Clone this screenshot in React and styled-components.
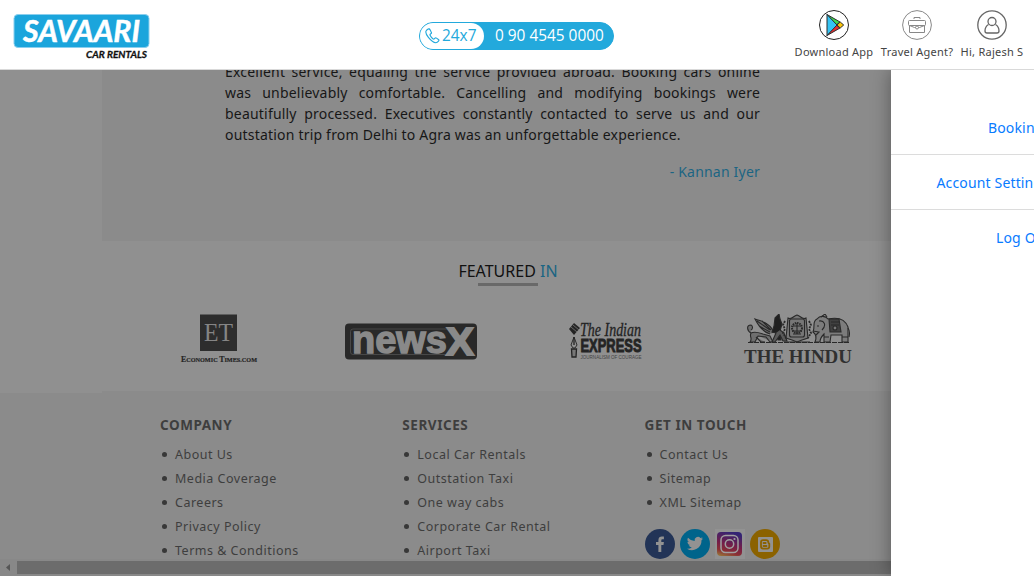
import React from "react";
import styled, { createGlobalStyle } from "styled-components";

const GlobalStyle = createGlobalStyle`
  * { box-sizing: border-box; }
  html, body { margin: 0; padding: 0; overflow: hidden; }
  body { font-family: "Noto Sans", "Open Sans", sans-serif; }
`;

const Screen = styled.div`
  position: relative;
  display: flex;
  flex-direction: column;
  width: 1034px;
  height: 576px;
  overflow: hidden;
  background: #8b8b8b;
`;

const Header = styled.header`
  display: flex;
  justify-content: space-between;
  flex: none;
  height: 70px;
  padding: 0 10px 0 13px;
  background: #fff;
  border-bottom: 1px solid #d9d9d9;
`;

const Brand = styled.svg`
  display: block;
  width: 138px;
  height: 48px;
  margin-top: 13px;
`;

const Phone = styled.div`
  display: flex;
  align-items: center;
  width: 195px;
  height: 28px;
  margin: 22px 0 0 88px;
  background: #23a9dc;
  border: 1px solid #23a9dc;
  border-radius: 14px;
  color: #fff;
  font-family: "Open Sans", "Noto Sans", sans-serif;
  font-size: 15.4px;
  line-height: 26px;
`;

const PhoneTag = styled.span`
  display: flex;
  align-items: center;
  width: 64px;
  height: 26px;
  padding-left: 5px;
  gap: 2px;
  background: #fff;
  border-radius: 13px;
  color: #23a9dc;
`;

const PhoneNumber = styled.span`
  margin-left: 11px;
  white-space: nowrap;
`;

const Actions = styled.nav`
  display: flex;
  gap: 7px;
`;

const Action = styled.a`
  display: flex;
  flex-direction: column;
  align-items: center;
  width: ${(p) => p.$width}px;
  padding-top: 10px;
  color: #444;
  font-size: 11px;
  line-height: 14px;
  letter-spacing: 0.25px;
  white-space: nowrap;
  svg { display: block; margin-bottom: 5px; }
`;

const Body = styled.div`
  display: flex;
  flex: 1;
  min-height: 0;
`;

const Rail = styled.aside`
  display: flex;
  flex: none;
  width: 102px;
  &::before {
    content: "";
    width: 100%;
    height: 323px;
    background: #909090;
  }
`;

const Main = styled.main`
  width: 932px;
`;

const Testimonial = styled.section`
  height: 171px;
  padding-left: 123px;
  overflow: hidden;
`;

const Quote = styled.div`
  width: 535px;
  margin-top: -9px;
  color: #171717;
  font-size: 14px;
  line-height: 21px;
  letter-spacing: 0.2px;
`;

const QuoteLine = styled.div`
  white-space: nowrap;
  text-align: ${(p) => (p.$last ? "left" : "justify")};
  text-align-last: ${(p) => (p.$last ? "left" : "justify")};
`;

const Author = styled.div`
  width: 535px;
  margin-top: 16px;
  color: #1b6583;
  font-size: 14px;
  line-height: 21px;
  letter-spacing: 0.2px;
  text-align: right;
`;

const Featured = styled.section`
  height: 150px;
  background: #909090;
`;

const FeaturedTitle = styled.h2`
  display: flex;
  flex-direction: column;
  align-items: center;
  width: 812px;
  margin: 0;
  padding-top: 19px;
  color: #111;
  font-size: 16px;
  font-weight: 400;
  line-height: 23px;
  span { color: #1b6583; }
  &::after {
    content: "";
    width: 60px;
    height: 3px;
    background: #696969;
  }
`;

const Logos = styled.div`
  display: flex;
  padding: 28px 0 0 78px;
  svg { display: block; flex: none; }
`;

const Footer = styled.footer`
  display: flex;
  padding: 24px 0 0 58px;
`;

const Column = styled.div`
  width: 242.3px;
  color: #3e3e3e;
`;

const ColumnTitle = styled.h3`
  margin: 0 0 7px;
  font-size: 13.5px;
  font-weight: 700;
  line-height: 20px;
  letter-spacing: 0.55px;
`;

const Link = styled.a`
  display: flex;
  align-items: center;
  height: 24px;
  font-size: 12.5px;
  letter-spacing: 0.5px;
  white-space: nowrap;
  &::before {
    content: "";
    width: 5px;
    height: 5px;
    margin: 0 8px 0 2px;
    border-radius: 50%;
    background: #383838;
  }
`;

const Social = styled.div`
  display: flex;
  gap: 5px;
  margin-top: 15px;
`;

const ScrollBar = styled.div`
  position: absolute;
  left: 0;
  right: 0;
  bottom: 0;
  display: flex;
  align-items: center;
  height: 17px;
  background: #888;
  svg { width: 17px; }
  &::after {
    content: "";
    flex: 1;
    height: 13px;
    background: #6c6c6c;
  }
`;

const Drawer = styled.aside`
  position: absolute;
  top: 70px;
  right: 0;
  bottom: 0;
  width: 143px;
  padding-top: 30px;
  background: #fff;
  clip-path: inset(0 0 0 -30px);
  box-shadow: 0 0 18px rgba(0, 0, 0, 0.38);
`;

const DrawerItem = styled.a`
  display: block;
  height: 55px;
  padding-left: ${(p) => p.$indent}px;
  border-bottom: ${(p) => (p.$last ? "none" : "1px solid #dcdcdc")};
  color: #087bff;
  font-size: 14px;
  line-height: 56px;
  letter-spacing: 0.15px;
  white-space: nowrap;
`;

const SavaariLogo = () => (
  <Brand viewBox="0 0 138 48">
    <rect x="1" y="1.500" width="135" height="33" rx="4" fill="#1ba5dc" stroke="#8bcfee" strokeWidth="1" />
    <text x="10" y="28.500" fill="#fff" fontFamily="Lato" fontWeight="700" fontStyle="italic" fontSize="30.500" stroke="#fff" strokeWidth=".5" textLength="117" lengthAdjust="spacingAndGlyphs">SAVAARI</text>
    <text x="73" y="44.500" fill="#111" fontFamily="Lato" fontWeight="700" fontStyle="italic" fontSize="10" stroke="#111" strokeWidth=".3" textLength="61" lengthAdjust="spacingAndGlyphs">CAR RENTALS</text>
  </Brand>
);

const Handset = () => (
  <svg width="15" height="16" viewBox="0 0 15 16" fill="none" stroke="#23a9dc" strokeWidth="1.150" strokeLinejoin="round">
    <path d="M3.200 1 1.500 2.300C.4 3.400 1 6.300 3.400 9.300s5.200 5.200 7.500 5.400c1.200 0 1.900-.7 2.600-1.500.6-.7.6-1.200-.1-1.700l-1.900-1.400c-.7-.5-1.200-.4-1.600.1l-.6.7c-.5.5-1 .3-1.500-.2C6.500 9.600 5.600 8.300 5.100 7.300c-.3-.6-.1-.9.4-1.300l.5-.4c.6-.4.6-.9.2-1.500L4.900 1.600C4.500.9 3.900.6 3.200 1Z" />
  </svg>
);

const PlayIcon = () => (
  <svg width="30" height="30" viewBox="0 0 30 30" strokeLinejoin="round">
    <circle cx="15" cy="15" r="14.500" fill="#fff" stroke="#222" />
    <g stroke="#2d2d2d" strokeWidth="1">
      <path d="m8 4.500 9 10.500 4-3Z" fill="#41da4f" />
      <path d="m8 25.500 9-10.500 4 3Z" fill="#e92c2c" />
      <path d="M8 4.500v21L18 15Z" fill="#35c3f3" />
      <path d="m18 15 3.200-3 3.500 3-3.500 3Z" fill="#fbc509" />
    </g>
  </svg>
);

const BriefcaseIcon = () => (
  <svg width="30" height="30" viewBox="0 0 30 30" fill="none" stroke="#888">
    <circle cx="15" cy="15" r="14.400" />
    <rect x="6.500" y="10.500" width="17" height="5" rx="1" />
    <path d="M7.500 15.500v7h15v-7M12 9V7.500h6V9M7.500 15.500l5 2h1m9-2-5 2h-1" />
    <circle cx="15" cy="17.500" r="1.500" />
  </svg>
);

const UserIcon = () => (
  <svg width="30" height="30" viewBox="0 0 30 30" fill="none" stroke="#666" strokeWidth="1.300">
    <circle cx="15" cy="15" r="14.200" />
    <circle cx="15" cy="11.500" r="4" />
    <path d="M11.500 14.500C9 16 8 18.300 8 21c0 1.300.7 2 2 2h10c1.300 0 2-.7 2-2 0-2.700-1-5-3.500-6.500" />
  </svg>
);

const EconomicTimes = () => (
  <svg width="165" height="54" viewBox="0 0 165 54">
    <rect x="20" y="0.500" width="37" height="36.500" fill="#2d2d2d" />
    <text x="24" y="27" fontFamily="Liberation Serif" fontSize="26" fill="#858585" textLength="29" lengthAdjust="spacingAndGlyphs">ET</text>
    <g fontFamily="Liberation Serif" fontWeight="700" fill="#252525" stroke="#252525" strokeWidth=".2">
      <text x="1" y="47.500" fontSize="8.500" textLength="76" lengthAdjust="spacingAndGlyphs"><tspan>E</tspan><tspan fontSize="6.700">CONOMIC </tspan><tspan>T</tspan><tspan fontSize="6.700">IMES.COM</tspan></text>
    </g>
  </svg>
);

const NewsX = () => (
  <svg width="224" height="54" viewBox="0 0 224 54">
    <rect x="0" y="9.500" width="132" height="36" rx="4" fill="#292929" />
    <path d="M8 15h94M8 40.500h94M5.500 17.500v20.500q0 2.500 2.500 2.500M5.500 17.500q0-2.500 2.500-2.500" fill="none" stroke="#505050" strokeWidth=".8" />
    <g fontFamily="Liberation Sans" fontWeight="700" fill="#898989" stroke="#898989">
      <text x="7" y="38.500" fontSize="38" strokeWidth="1.400" textLength="95" lengthAdjust="spacingAndGlyphs">news</text>
      <text x="101" y="40.500" fontSize="38" strokeWidth="1.800" textLength="28" lengthAdjust="spacingAndGlyphs">X</text>
    </g>
  </svg>
);

const IndianExpress = () => (
  <svg width="174" height="54" viewBox="0 0 174 54" fill="#242424">
    <path d="m5 9 6 5-6 7-5-6Z" />
    <path d="m2 13 6 5M4 11l6 5" stroke="#777" strokeWidth=".8" />
    <path d="m5 23-3 8 2 3h2l2-3Z" fill="none" stroke="#2d2d2d" />
    <path d="M5 23v8M2.500 35h5l-.5 8H3Z" fill="#777" stroke="#242424" strokeWidth="1.300" />
    <text x="11" y="22" fontFamily="Liberation Serif" fontStyle="italic" fontSize="18" stroke="#242424" strokeWidth=".3" textLength="61" lengthAdjust="spacingAndGlyphs">The Indian</text>
    <text x="11.500" y="38" fontFamily="Liberation Sans" fontWeight="700" fontSize="18" stroke="#242424" strokeWidth=".9" textLength="61" lengthAdjust="spacingAndGlyphs">EXPRESS</text>
    <text x="11.500" y="44.500" fontFamily="Liberation Sans" fontSize="4.800" fill="#444" textLength="61" lengthAdjust="spacingAndGlyphs">JOURNALISM OF COURAGE</text>
  </svg>
);

const TheHindu = () => (
  <svg width="110" height="54" viewBox="0 0 110 54">
    <g fill="none" stroke="#292929" strokeWidth="1.100">
      <path d="M8 19c-4-2-5-8 0-8 2 1 2 4 0 5M8 19c4-2 9 0 12 1l7 2 3 6M8 19c-2 4 2 5-1 9h5l3-6 8 1 4 5h5M13 23l5 5h4" fill="#6e6e6e" />
      <path d="M27 20c-7-2-11-7-15-15 5 2 9 2 12 5 3 2 6 5 6 9M14 7l13 9M16 12l11 6M19 7l9 9" fill="#6e6e6e" />
      <path d="m32 4 4-4 1 5 2 5-2 7 1 9h-3l-2-7-4-1 2-6Z" fill="#202020" />
      <path d="M37 16l4 3 3 8h-4l-3-6-5 7h-3l4-9" fill="#5a5a5a" />
      <path d="M45 4c4 2 5-2 9-3 4 1 5 5 9 3l2 20-6 2-5 2-5-2-6-2Z" fill="#767676" />
      <rect x="46.500" y="5" width="15" height="18" rx="2" />
      <path d="M42 7l-2 4 2 4-2 4 3 5M66 7l2 4-2 4 2 4-3 5" strokeDasharray="2 1" strokeWidth="1.800" />
      <circle cx="54" cy="14" r="5" strokeDasharray="1.500 .8" strokeWidth="2" />
      <path d="M50 12h8M49 17h10M50 20h8M54 9v10M41 28h26" />
      <path d="M74 5c3-4 9-3 11 0 9-2 17 0 20 8v15h-6v-7H88l-1 7h-6v-8c-2 2-4 4-4 8h-5c2-5 1-8-2-10 1-2 1-4 1-7 0-3 1-5 3-6Z" fill="#7c7c7c" />
      <path d="M76 7c5-1 8 4 3 9M70 17l6 1-3 3M74 12h2M81 23h5M99 23h6M105 14c2 3 2 5 1 9M78 3l4-3 2 3" />
      <path d="M86 5h10l2 13H87ZM88 8h8M88 11h8" fill="#404040" />
      <circle cx="92" cy="14" r="2" fill="#777" />
      <path d="M5 28.500h101" strokeDasharray="5 1" />
    </g>
    <text x="1" y="49.300" fontFamily="Liberation Serif" fontWeight="700" fontSize="19.500" fill="#303030" textLength="108" lengthAdjust="spacingAndGlyphs">THE HINDU</text>
  </svg>
);

const Facebook = () => (
  <svg width="30" height="30" viewBox="0 0 30 30">
    <circle cx="15" cy="15" r="15" fill="#223457" />
    <path d="M13.400 23v-7H11v-3h2.400v-2c0-2.500 1.500-3.500 3.500-3.500h2v2.700h-1.300c-1 0-1.300.4-1.300 1.200V13h2.600l-.4 3h-2.200v7Z" fill="#929292" />
  </svg>
);

const Twitter = () => (
  <svg width="30" height="30" viewBox="0 0 30 30">
    <circle cx="15" cy="15" r="15" fill="#00648b" />
    <path d="M23 9.600a7 7 0 0 1-1.900.6 3.300 3.300 0 0 0 1.400-1.900 7 7 0 0 1-2.100.8 3.300 3.300 0 0 0-5.700 3A9.400 9.400 0 0 1 8 8.700a3.300 3.300 0 0 0 1 4.400 3 3 0 0 1-1.500-.4 3.300 3.300 0 0 0 2.700 3.300 3 3 0 0 1-1.500.1 3.300 3.300 0 0 0 3.100 2.300A7 7 0 0 1 7 19.700a9.500 9.500 0 0 0 14.500-8.400A7 7 0 0 0 23 9.600Z" fill="#929292" />
  </svg>
);

const Instagram = () => (
  <svg width="30" height="30" viewBox="0 0 30 30">
    <defs>
      <linearGradient id="insta" x1="0.200" y1="1" x2="0.500" y2="0">
        <stop offset="0" stopColor="#96703a" />
        <stop offset=".22" stopColor="#8a2f34" />
        <stop offset=".5" stopColor="#751d48" />
        <stop offset="1" stopColor="#332474" />
      </linearGradient>
    </defs>
    <rect width="30" height="30" fill="#929292" />
    <rect x="2" y="3" width="25" height="24" rx="4" fill="url(#insta)" />
    <g fill="none" stroke="#a0a0a0" strokeWidth="1.500">
      <rect x="6" y="6.500" width="17" height="17" rx="4.500" />
      <circle cx="14.500" cy="15" r="4.200" />
    </g>
    <circle cx="19.500" cy="10" r="1.100" fill="#a0a0a0" />
  </svg>
);

const Blogger = () => (
  <svg width="30" height="30" viewBox="0 0 30 30">
    <circle cx="15" cy="15" r="15" fill="#8b6200" />
    <rect x="8" y="8" width="15" height="15" rx="1" fill="#929292" />
    <path d="M13 11.200h3c1.500 0 2.300.8 2.300 2 0 1 .5 1.100 1 1.600v2.700c0 1.300-.8 2.100-2.100 2.100H13c-1.200 0-2-.8-2-2v-4.300c0-1.300.8-2.100 2-2.100Zm.5 2.800h2.200m-2.200 3h3" fill="none" stroke="#8b6200" strokeWidth="1.800" strokeLinecap="round" />
  </svg>
);

const quoteLines = [
  "Excellent service, equaling the service provided abroad. Booking cars online",
  "was unbelievably comfortable. Cancelling and modifying bookings were",
  "beautifully processed. Executives constantly contacted to serve us and our",
  "outstation trip from Delhi to Agra was an unforgettable experience.",
];

const columns = [
  { title: "COMPANY", links: ["About Us", "Media Coverage", "Careers", "Privacy Policy", "Terms & Conditions"] },
  { title: "SERVICES", links: ["Local Car Rentals", "Outstation Taxi", "One way cabs", "Corporate Car Rental", "Airport Taxi"] },
  { title: "GET IN TOUCH", links: ["Contact Us", "Sitemap", "XML Sitemap"], social: true },
];

export default function App() {
  return (
    <Screen>
      <GlobalStyle />
      <Header>
        <SavaariLogo />
        <Phone>
          <PhoneTag><Handset />24x7</PhoneTag>
          <PhoneNumber>0 90 4545 0000</PhoneNumber>
        </Phone>
        <Actions>
          <Action $width={80}><PlayIcon />Download App</Action>
          <Action $width={72}><BriefcaseIcon />Travel Agent?</Action>
          <Action $width={64}><UserIcon />Hi, Rajesh S</Action>
        </Actions>
      </Header>
      <Body>
        <Rail />
        <Main>
          <Testimonial>
            <Quote>
              {quoteLines.map((line, i) => (
                <QuoteLine key={line} $last={i === quoteLines.length - 1}>{line}</QuoteLine>
              ))}
            </Quote>
            <Author>- Kannan Iyer</Author>
          </Testimonial>
          <Featured>
            <FeaturedTitle><div>FEATURED <span>IN</span></div></FeaturedTitle>
            <Logos>
              <EconomicTimes />
              <NewsX />
              <IndianExpress />
              <TheHindu />
            </Logos>
          </Featured>
          <Footer>
            {columns.map((column) => (
              <Column key={column.title}>
                <ColumnTitle>{column.title}</ColumnTitle>
                {column.links.map((link) => <Link key={link}>{link}</Link>)}
                {column.social && (
                  <Social><Facebook /><Twitter /><Instagram /><Blogger /></Social>
                )}
              </Column>
            ))}
          </Footer>
        </Main>
      </Body>
      <ScrollBar>
        <svg height="17" viewBox="0 0 17 17"><path d="M10 5v7L6 8.500Z" fill="#555" /></svg>
      </ScrollBar>
      <Drawer>
        <DrawerItem $indent={97}>Bookings</DrawerItem>
        <DrawerItem $indent={45.5}>Account Settings</DrawerItem>
        <DrawerItem $indent={105} $last>Log Out</DrawerItem>
      </Drawer>
    </Screen>
  );
}
